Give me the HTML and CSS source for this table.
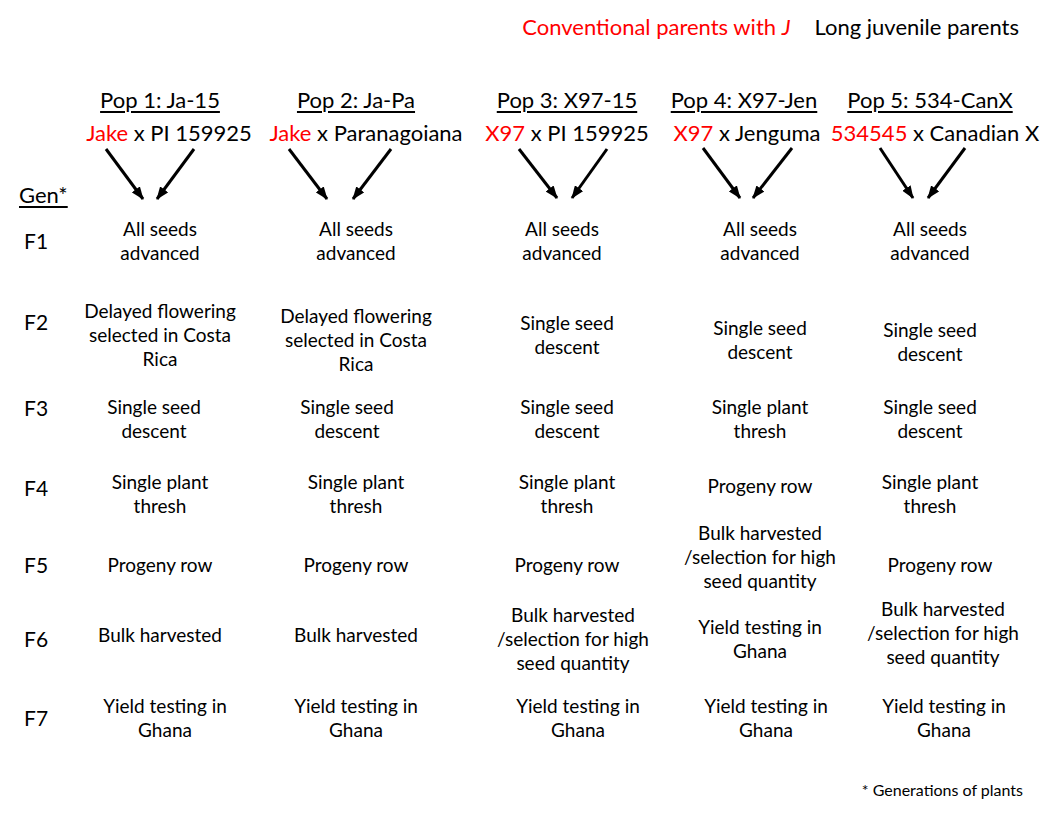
FILE: index.html
```html
<!DOCTYPE html>
<html lang="en">
<head>
<meta charset="utf-8">
<title>Population development scheme</title>
<link rel="stylesheet" href="styles.css">
</head>
<body>
<div class="slide">
  <div class="legend">
    <span class="red">Conventional parents with <i>J</i></span>
    <span>Long juvenile parents</span>
  </div>

  <div class="chart">
    <!-- population titles -->
    <div></div>
    <div class="pop">Pop 1: Ja-15</div>
    <div class="pop">Pop 2: Ja-Pa</div>
    <div class="pop">Pop 3: X97-15</div>
    <div class="pop l16">Pop 4: X97-Jen</div>
    <div class="pop">Pop 5: 534-CanX</div>

    <!-- crosses -->
    <div></div>
    <div class="cross r9"><span class="red">Jake</span> x PI 159925</div>
    <div class="cross r10"><span class="red">Jake</span> x Paranagoiana</div>
    <div class="cross"><span class="red">X97</span> x PI 159925</div>
    <div class="cross l13"><span class="red">X97</span> x Jenguma</div>
    <div class="cross r5"><span class="red">534545</span> x Canadian X</div>

    <!-- arrows -->
    <div class="gen-head">Gen*</div>
    <svg class="arrows" viewBox="0 0 930 60" width="930" height="60" aria-hidden="true">
      <defs>
        <marker id="ah" viewBox="0 0 13 10" refX="12" refY="5" markerWidth="13" markerHeight="10" orient="auto" markerUnits="userSpaceOnUse">
          <path d="M0,0 L13,5 L0,10 Z" fill="#000"/>
        </marker>
      </defs>
      <g stroke="#000" stroke-width="3" marker-end="url(#ah)">
        <line x1="30" y1="3" x2="67" y2="53"/>
        <line x1="118" y1="3" x2="81" y2="53"/>
        <line x1="213" y1="3" x2="251" y2="53"/>
        <line x1="315" y1="3" x2="277" y2="53"/>
        <line x1="443" y1="3" x2="481" y2="52"/>
        <line x1="531" y1="3" x2="496" y2="52"/>
        <line x1="627" y1="2" x2="664" y2="52"/>
        <line x1="716" y1="2" x2="677" y2="52"/>
        <line x1="804" y1="2" x2="837" y2="52"/>
        <line x1="889" y1="2" x2="852" y2="52"/>
      </g>
    </svg>

    <!-- F1 -->
    <div class="gen">F1</div>
    <div class="cell">All seeds<br>advanced</div>
    <div class="cell">All seeds<br>advanced</div>
    <div class="cell l5">All seeds<br>advanced</div>
    <div class="cell">All seeds<br>advanced</div>
    <div class="cell">All seeds<br>advanced</div>

    <!-- F2 -->
    <div class="gen u13">F2</div>
    <div class="cell">Delayed flowering<br>selected in Costa<br>Rica</div>
    <div class="cell d5">Delayed flowering<br>selected in Costa<br>Rica</div>
    <div class="cell">Single seed<br>descent</div>
    <div class="cell d5">Single seed<br>descent</div>
    <div class="cell d7">Single seed<br>descent</div>

    <!-- F3 -->
    <div class="gen u11">F3</div>
    <div class="cell l6">Single seed<br>descent</div>
    <div class="cell l9">Single seed<br>descent</div>
    <div class="cell">Single seed<br>descent</div>
    <div class="cell">Single plant<br>thresh</div>
    <div class="cell">Single seed<br>descent</div>

    <!-- F4 -->
    <div class="gen u6">F4</div>
    <div class="cell">Single plant<br>thresh</div>
    <div class="cell">Single plant<br>thresh</div>
    <div class="cell">Single plant<br>thresh</div>
    <div class="cell u8">Progeny row</div>
    <div class="cell">Single plant<br>thresh</div>

    <!-- F5 -->
    <div class="gen">F5</div>
    <div class="cell">Progeny row</div>
    <div class="cell">Progeny row</div>
    <div class="cell">Progeny row</div>
    <div class="cell u8">Bulk harvested<br>/selection for high<br>seed quantity</div>
    <div class="cell r10">Progeny row</div>

    <!-- F6 -->
    <div class="gen">F6</div>
    <div class="cell u4">Bulk harvested</div>
    <div class="cell u4">Bulk harvested</div>
    <div class="cell r6">Bulk harvested<br>/selection for high<br>seed quantity</div>
    <div class="cell">Yield testing in<br>Ghana</div>
    <div class="cell r13 u6">Bulk harvested<br>/selection for high<br>seed quantity</div>

    <!-- F7 -->
    <div class="gen">F7</div>
    <div class="cell r5">Yield testing in<br>Ghana</div>
    <div class="cell">Yield testing in<br>Ghana</div>
    <div class="cell r11">Yield testing in<br>Ghana</div>
    <div class="cell r6">Yield testing in<br>Ghana</div>
    <div class="cell r14">Yield testing in<br>Ghana</div>
  </div>

  <div class="footnote">* Generations of plants</div>
</div>
</body>
</html>
```

FILE: styles.css
```css
html, body {
  margin: 0;
  padding: 0;
  background: #ffffff;
}

.slide {
  width: 1056px;
  height: 816px;
  box-sizing: border-box;
  padding-top: 14px;
  font-family: Lato, "Liberation Sans", sans-serif;
  color: #000000;
  overflow: hidden;
}

.red {
  color: #ff0000;
}

.legend {
  display: flex;
  justify-content: flex-end;
  gap: 24px;
  padding-right: 37px;
  font-size: 22px;
  line-height: 26px;
  margin-bottom: 47px;
}

.chart {
  display: grid;
  grid-template-columns: 76px 168px 224px 198px 188px 152px;
  grid-template-rows: 26px 33px 46px 98px 90px 78px 72px 70px 78px 80px;
  justify-items: center;
  align-items: center;
}

.pop {
  font-size: 22px;
  line-height: 26px;
  white-space: nowrap;
  text-decoration: underline;
  text-decoration-thickness: 1.5px;
  text-underline-offset: 3px;
}

.cross {
  align-self: end;
  font-size: 22px;
  line-height: 26px;
  white-space: nowrap;
}

.gen-head {
  justify-self: start;
  align-self: end;
  margin-bottom: -16px;
  padding-left: 19px;
  font-size: 22px;
  line-height: 26px;
  text-decoration: underline;
  text-decoration-thickness: 1.5px;
  text-underline-offset: 3px;
}

.arrows {
  grid-column: 2 / -1;
  justify-self: start;
  align-self: start;
  overflow: visible;
}

.gen {
  justify-self: start;
  padding-left: 24px;
  font-size: 21px;
  line-height: 26px;
}

.cell {
  font-size: 19px;
  line-height: 24px;
  text-align: center;
  white-space: nowrap;
}

.footnote {
  margin-top: 22px;
  padding-right: 33px;
  text-align: right;
  font-size: 16px;
  line-height: 20px;
}

/* small alignment nudges (shift = half the margin) */
.l5 { margin-right: 10px; }
.l6 { margin-right: 12px; }
.l9 { margin-right: 18px; }
.l13 { margin-right: 26px; }
.l16 { margin-right: 32px; }
.r5 { margin-left: 10px; }
.r6 { margin-left: 12px; }
.r9 { margin-left: 18px; }
.r10 { margin-left: 20px; }
.r11 { margin-left: 22px; }
.r13 { margin-left: 26px; }
.r14 { margin-left: 28px; }
.u4 { margin-bottom: 8px; }
.u6 { margin-bottom: 12px; }
.u8 { margin-bottom: 16px; }
.u11 { margin-bottom: 22px; }
.u13 { margin-bottom: 26px; }
.d5 { margin-top: 10px; }
.d7 { margin-top: 14px; }
```
